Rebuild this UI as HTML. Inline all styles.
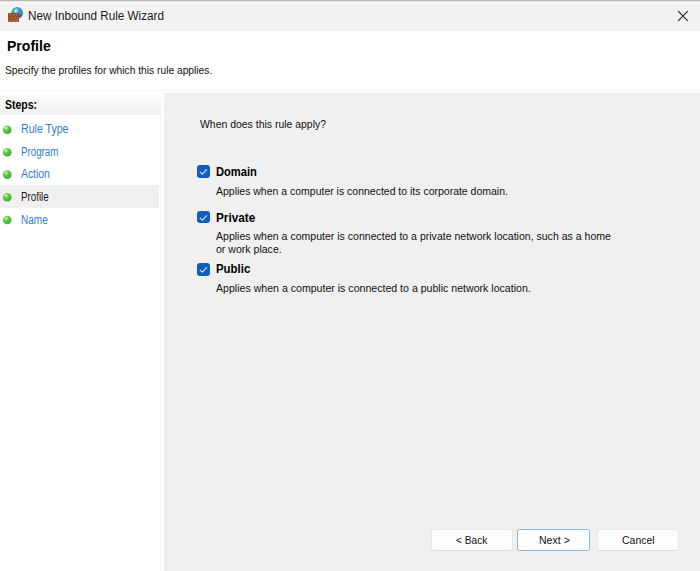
<!DOCTYPE html>
<html>
<head>
<meta charset="utf-8">
<title>New Inbound Rule Wizard</title>
<style>
*{box-sizing:border-box;margin:0;padding:0}
html,body{width:700px;height:571px;overflow:hidden;background:#f0f0f0}
body{position:relative;font-family:"Liberation Sans",sans-serif;font-size:11px;color:#000}
.abs{position:absolute}
.t{position:absolute;white-space:nowrap;line-height:16px;transform-origin:0 0;font-family:"Liberation Sans",sans-serif}
#topline{left:0;top:0;width:700px;height:2px;background:linear-gradient(#b6b6b6 0,#b6b6b6 50%,#e9e9e9 50%,#e9e9e9 100%)}
#titlebar{left:0;top:2px;width:700px;height:29px;background:#f3f3f3}
#header{left:0;top:30.7px;width:700px;height:62.3px;background:#fff}
#sep{left:0;top:90px;width:700px;height:1px;background:#f6f6f6}
#steps{left:0;top:93px;width:164px;height:478px;background:#fff}
#stepsline{left:160px;top:93px;width:1px;height:478px;background:#f7f7f7}
#stepshead{left:0;top:93px;width:161px;height:22px;background:linear-gradient(#fdfdfd,#f0f0f0)}
#main{left:164px;top:93px;width:536px;height:478px;background:#f0f0f0}
.dot{position:absolute;left:3px;width:8.6px;height:8.6px;border-radius:50%;background:radial-gradient(circle at 36% 28%,#d4f4c2 0%,#62cd44 38%,#3eae2b 100%)}
#sel{left:0;top:185.2px;width:159px;height:22.4px;background:#f0f0f0}
.cb{position:absolute;left:196.9px;width:13px;height:12.9px;border-radius:3px;background:#0f5ec2}
.cb svg{position:absolute;left:0;top:0;width:13px;height:13px}
.btn{position:absolute;top:529.4px;height:21.2px;border:1px solid #e7e7e7;border-bottom-color:#dedede;border-radius:2.5px;background:#fdfdfd}
</style>
</head>
<body>
<div class="abs" id="topline"></div>
<div class="abs" id="titlebar"></div>
<svg class="abs" style="left:8px;top:7px;overflow:visible" width="15" height="15" viewBox="0 0 15 15">
  <defs>
    <radialGradient id="gl" cx="0.4" cy="0.3" r="0.75">
      <stop offset="0" stop-color="#cfe8fb"/>
      <stop offset="0.3" stop-color="#4c9fea"/>
      <stop offset="0.75" stop-color="#1f6fd6"/>
      <stop offset="1" stop-color="#123f8c"/>
    </radialGradient>
  </defs>
  <circle cx="9.1" cy="5.9" r="5.8" fill="url(#gl)"/>
  <path d="M3.7 5 Q4.2 2.8 6.4 2 Q7.4 2.8 6.6 4 Q5.4 5.4 3.7 5Z" fill="#22c922"/>
  <path d="M11.6 3.2 Q13.6 4 14.3 6.2 Q13.4 7.2 12.2 6.6 Q11 5 11.6 3.2Z" fill="#22c922"/>
  <circle cx="7.3" cy="4.1" r="0.9" fill="#fff" opacity="0.9"/>
  <rect x="0" y="6.1" width="10.9" height="8.7" fill="#85371a"/>
  <g fill="#b4713f">
    <rect x="0.5" y="6.6" width="2.6" height="2.1"/><rect x="3.9" y="6.6" width="2.6" height="2.1"/><rect x="7.3" y="6.6" width="2.9" height="2.1"/>
    <rect x="0.4" y="9.5" width="1.2" height="2.1"/><rect x="2.4" y="9.5" width="2.6" height="2.1"/><rect x="5.8" y="9.5" width="2.6" height="2.1"/><rect x="9.2" y="9.5" width="1.3" height="2.1"/>
    <rect x="0.5" y="12.4" width="2.6" height="1.9"/><rect x="3.9" y="12.4" width="2.6" height="1.9"/><rect x="7.3" y="12.4" width="2.9" height="1.9"/>
  </g>
</svg>
<svg class="abs" style="left:677.3px;top:10px" width="12" height="12" viewBox="0 0 12 12"><path d="M1.1 1.1L10.8 10.8M10.8 1.1L1.1 10.8" stroke="#262626" stroke-width="1.2" fill="none"/></svg>

<div class="abs" id="header"></div>
<div class="abs" id="sep"></div>
<div class="abs" id="steps"></div>
<div class="abs" id="stepsline"></div>
<div class="abs" id="main"></div>
<div class="abs" id="stepshead"></div>
<div class="abs" id="sel"></div>


<svg class="abs" style="left:0;top:120px" width="16" height="110" viewBox="0 0 16 110">
  <defs><radialGradient id="dg" cx="0.36" cy="0.3" r="0.75"><stop offset="0" stop-color="#d6f5c6"/><stop offset="0.4" stop-color="#5fcc42"/><stop offset="1" stop-color="#3aa828"/></radialGradient></defs>
  <circle cx="7.2" cy="9.7" r="4.3" fill="url(#dg)"/>
  <circle cx="7.2" cy="32.2" r="4.3" fill="url(#dg)"/>
  <circle cx="7.2" cy="54.6" r="4.3" fill="url(#dg)"/>
  <circle cx="7.2" cy="77.3" r="4.3" fill="url(#dg)"/>
  <circle cx="7.2" cy="100" r="4.3" fill="url(#dg)"/>
</svg>
<div class="cb" style="top:165.4px"><svg viewBox="0 0 13 13"><path d="M3.2 7.1L5.4 9.1L9.6 4.7" stroke="#d4e5f8" stroke-width="1.2" fill="none" stroke-linecap="round" stroke-linejoin="round"/></svg></div>
<div class="cb" style="top:210.6px"><svg viewBox="0 0 13 13"><path d="M3.2 7.1L5.4 9.1L9.6 4.7" stroke="#d4e5f8" stroke-width="1.2" fill="none" stroke-linecap="round" stroke-linejoin="round"/></svg></div>
<div class="cb" style="top:262.8px"><svg viewBox="0 0 13 13"><path d="M3.2 7.1L5.4 9.1L9.6 4.7" stroke="#d4e5f8" stroke-width="1.2" fill="none" stroke-linecap="round" stroke-linejoin="round"/></svg></div>

<div class="btn" style="left:431px;width:82px"></div>
<div class="btn" style="left:517.2px;width:73.2px;top:529px;height:22px;border-color:#84baeb"></div>
<div class="btn" style="left:597.4px;width:82px"></div>

<div class="t" id="title" style="left:27.80px;top:8.24px;font-size:12px;color:#1b1b1b;transform:scaleX(0.9756)">New Inbound Rule Wizard</div>
<div class="t" id="h1" style="left:6.90px;top:37.55px;font-size:14px;color:#000;transform:scaleX(1.0028);font-weight:bold">Profile</div>
<div class="t" id="sub" style="left:4.90px;top:61.59px;font-size:11px;color:#111;transform:scaleX(0.9314)">Specify the profiles for which this rule applies.</div>
<div class="t" id="stepsTitle" style="left:5.00px;top:96.57px;font-size:12.5px;color:#000;transform:scaleX(0.8402);font-weight:bold">Steps:</div>
<div class="t" id="s1" style="left:21.10px;top:121.14px;font-size:12px;color:#2e7bd4;transform:scaleX(0.8827)">Rule Type</div>
<div class="t" id="s2" style="left:21.30px;top:144.04px;font-size:12px;color:#2e7bd4;transform:scaleX(0.8106)">Program</div>
<div class="t" id="s3" style="left:21.30px;top:166.24px;font-size:12px;color:#2e7bd4;transform:scaleX(0.8633)">Action</div>
<div class="t" id="s4" style="left:21.30px;top:189.14px;font-size:12px;color:#1a1a1a;transform:scaleX(0.8143)">Profile</div>
<div class="t" id="s5" style="left:21.30px;top:211.84px;font-size:12px;color:#2e7bd4;transform:scaleX(0.8340)">Name</div>
<div class="t" id="q" style="left:199.60px;top:116.39px;font-size:11px;color:#111;transform:scaleX(0.9496)">When does this rule apply?</div>
<div class="t" id="l1" style="left:216.00px;top:163.84px;font-size:12px;color:#000;transform:scaleX(0.9292);font-weight:bold">Domain</div>
<div class="t" id="d1" style="left:216.10px;top:183.19px;font-size:11px;color:#111;transform:scaleX(0.9529)">Applies when a computer is connected to its corporate domain.</div>
<div class="t" id="l2" style="left:216.00px;top:210.04px;font-size:12px;color:#000;transform:scaleX(0.9817);font-weight:bold">Private</div>
<div class="t" id="d2a" style="left:216.10px;top:228.49px;font-size:11px;color:#111;transform:scaleX(0.9582)">Applies when a computer is connected to a private network location, such as a home</div>
<div class="t" id="d2b" style="left:216.30px;top:241.09px;font-size:11px;color:#111;transform:scaleX(0.9593)">or work place.</div>
<div class="t" id="l3" style="left:216.00px;top:261.34px;font-size:12px;color:#000;transform:scaleX(0.9524);font-weight:bold">Public</div>
<div class="t" id="d3" style="left:216.10px;top:280.49px;font-size:11px;color:#111;transform:scaleX(0.9620)">Applies when a computer is connected to a public network location.</div>
<div class="t" id="b1" style="left:456.00px;top:532.19px;font-size:11px;color:#111;transform:scaleX(0.9252)">&lt; Back</div>
<div class="t" id="b2" style="left:538.60px;top:532.19px;font-size:11px;color:#111;transform:scaleX(0.9592)">Next &gt;</div>
<div class="t" id="b3" style="left:622.00px;top:532.19px;font-size:11px;color:#111;transform:scaleX(0.9518)">Cancel</div>
</body>
</html>
